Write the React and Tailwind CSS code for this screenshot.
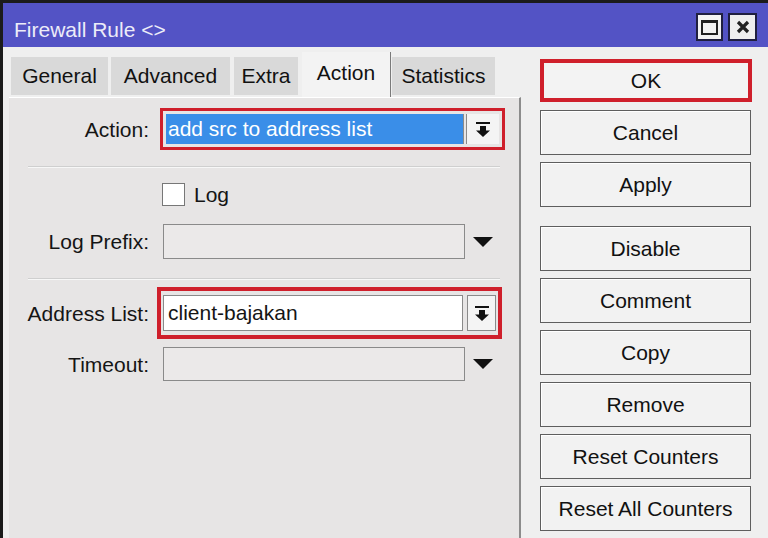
import React from 'react'

const font = { fontFamily: '"Liberation Sans", Arial, sans-serif' }

function BarArrow() {
  return (
    <svg width="14" height="15" viewBox="0 0 14 15">
      <rect x="0" y="0" width="14" height="2" fill="#111" />
      <rect x="4" y="4" width="6" height="5" fill="#111" />
      <polygon points="0,8.5 14,8.5 7,15" fill="#111" />
    </svg>
  )
}

function DownTriangle() {
  return (
    <svg width="20" height="10" viewBox="0 0 20 10" className="ml-[8px]">
      <polygon points="0,0 20,0 10,10" fill="#111" />
    </svg>
  )
}

function Label({ children }) {
  return <div className="w-[140px] shrink-0 text-right text-[21px] text-[#151515] leading-none">{children}</div>
}

function Separator() {
  return (
    <div className="ml-[19px] w-[472px]">
      <div className="h-px bg-[#cfcfcf]" />
      <div className="h-px bg-[#f7f7f7]" />
    </div>
  )
}

function EmptyField() {
  return <div className="w-[302px] h-full border border-[#8a8a8a] bg-[#ebe9e9]" />
}

function Tab({ label, w, active, ml }) {
  if (active) {
    return (
      <div
        className={`${w} ${ml} h-[45px] bg-[#f3f3f3] border-r border-[#7a7a7a] flex items-center justify-center text-[21px] text-[#111] pb-[4px]`}
      >
        {label}
      </div>
    )
  }
  return (
    <div className={`${w} ${ml} h-[38px] mb-[2px] bg-[#d9d9d9] flex items-center justify-center text-[21px] text-[#111]`}>
      {label}
    </div>
  )
}

function SideButton({ label, mt }) {
  return (
    <div
      className={`${mt} w-[211px] h-[45px] border border-[#5e5e5e] bg-[#f2f2f2] shadow-[inset_1px_1px_0_#ffffff] flex items-center justify-center text-[21px] text-[#111]`}
    >
      {label}
    </div>
  )
}

export default function App() {
  return (
    <div
      style={font}
      className="w-[768px] h-[538px] overflow-hidden flex flex-col bg-[#efefef] border-l-[3px] border-t-[3px] border-[#1b1b1b]"
    >
      {/* title bar */}
      <div className="h-[44px] shrink-0 bg-[#5353c5] flex items-center pl-[11px] pr-[11px]">
        <span className="text-[21px] text-[#ececf8] mt-[10px]">Firewall Rule &lt;&gt;</span>
        <div className="ml-auto flex gap-[5px] mt-[4px]">
          <div className="w-[27px] h-[28px] bg-[#f4f4f4] border-2 border-[#202040] flex items-center justify-center">
            <div className="w-[17px] h-[15px] border-2 border-t-[3px] border-[#222]" />
          </div>
          <div className="w-[29px] h-[28px] bg-[#efefef] border-2 border-[#202040] flex items-center justify-center">
            <svg width="14" height="14" viewBox="0 0 14 14">
              <path d="M2 2 L12 12 M12 2 L2 12" stroke="#222" strokeWidth="3.2" />
            </svg>
          </div>
        </div>
      </div>

      <div className="flex flex-1 min-h-0">
        {/* left: tabs + panel */}
        <div className="w-[518px] shrink-0 flex flex-col">
          <div className="h-[50px] shrink-0 flex items-end pl-[8px]">
            <Tab label="General" w="w-[97px]" ml="" />
            <Tab label="Advanced" w="w-[119px]" ml="ml-[3px]" />
            <Tab label="Extra" w="w-[64px]" ml="ml-[4px]" />
            <Tab label="Action" w="w-[89px]" ml="ml-[4px]" active />
            <Tab label="Statistics" w="w-[103px]" ml="ml-[1px]" />
          </div>

          <div className="flex-1 ml-[6px] bg-[#e7e5e5] border-t border-white border-r-2 border-r-[#8c8c8c] flex flex-col">
            {/* Action */}
            <div className="mt-[10px] h-[42px] flex items-center">
              <Label>Action:</Label>
              <div className="ml-[11px] w-[345px] h-[42px] border-[3px] border-[#cf1f2b] p-[3px] flex">
                <div className="w-[297px] h-full bg-[#3a8ee8] flex items-center pl-[2px] text-[21px] text-white">
                  add src to address list
                </div>
                <div className="w-[4px] h-full flex justify-between">
                  <div className="w-px bg-[#8a8a8a]" />
                  <div className="w-px bg-[#8a8a8a]" />
                </div>
                <div className="flex-1 bg-[#f4f4f4] flex items-center justify-center">
                  <BarArrow />
                </div>
              </div>
            </div>

            <div className="mt-[16px]">
              <Separator />
            </div>

            {/* Log */}
            <div className="mt-[15px] h-[23px] flex items-center">
              <div className="w-[140px] shrink-0" />
              <div className="ml-[13px] w-[23px] h-[23px] border border-[#777] bg-white" />
              <span className="ml-[9px] text-[21px] text-[#151515]">Log</span>
            </div>

            {/* Log Prefix */}
            <div className="mt-[18px] h-[35px] flex items-center">
              <Label>Log Prefix:</Label>
              <div className="ml-[14px] h-full flex items-center">
                <EmptyField />
                <DownTriangle />
              </div>
            </div>

            <div className="mt-[19px]">
              <Separator />
            </div>

            {/* Address List */}
            <div className="mt-[7px] h-[52px] flex items-center">
              <Label>Address List:</Label>
              <div className="ml-[8px] w-[345px] h-[52px] border-[4px] border-[#cf1f2b] py-[4px] pl-[2px] pr-[2px] flex">
                <div className="w-[300px] h-full bg-white border border-[#8a8a8a] flex items-center pl-[4px] text-[21px] text-[#151515]">
                  client-bajakan
                </div>
                <div className="ml-[4px] flex-1 h-full bg-[#f4f4f4] border border-[#8a8a8a] flex items-center justify-center">
                  <BarArrow />
                </div>
              </div>
            </div>

            {/* Timeout */}
            <div className="mt-[8px] h-[34px] flex items-center">
              <Label>Timeout:</Label>
              <div className="ml-[14px] h-full flex items-center">
                <EmptyField />
                <DownTriangle />
              </div>
            </div>
          </div>
        </div>

        {/* right: buttons */}
        <div className="flex-1 flex flex-col pl-[19px] pt-[12px]">
          <div className="w-[212px] h-[43px] border-[4px] border-[#cf1f2b] bg-[#f3f3f3] flex items-center justify-center text-[21px] text-[#111]">
            OK
          </div>
          <SideButton label="Cancel" mt="mt-[8px]" />
          <SideButton label="Apply" mt="mt-[7px]" />
          <SideButton label="Disable" mt="mt-[19px]" />
          <SideButton label="Comment" mt="mt-[7px]" />
          <SideButton label="Copy" mt="mt-[7px]" />
          <SideButton label="Remove" mt="mt-[7px]" />
          <SideButton label="Reset Counters" mt="mt-[7px]" />
          <SideButton label="Reset All Counters" mt="mt-[7px]" />
        </div>
      </div>
    </div>
  )
}
